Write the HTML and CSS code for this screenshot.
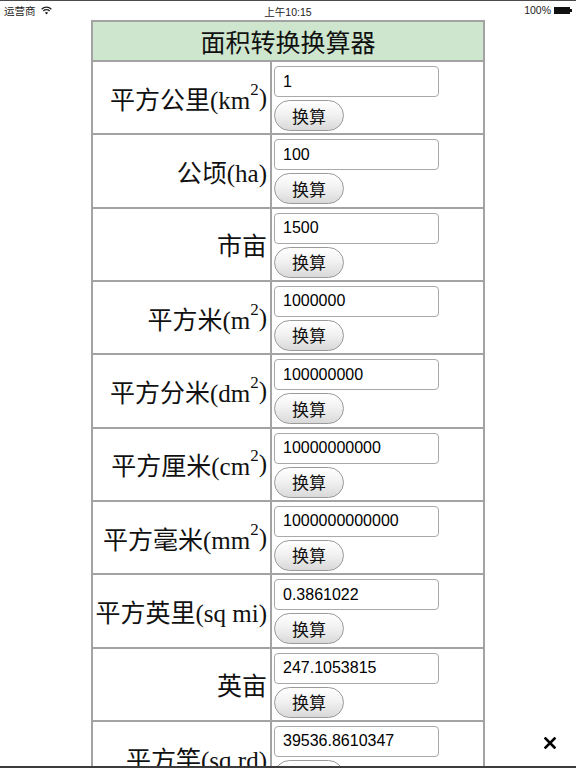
FILE: index.html
```html
<!DOCTYPE html>
<html lang="zh-CN">
<head>
<meta charset="utf-8">
<title>面积转换换算器</title>
<link rel="stylesheet" href="styles.css">
</head>
<body>
<div class="statusbar">
  <div class="sb-left">
    <span>运营商</span>
    <svg class="wifi" width="11" height="9" viewBox="0 0 11 9">
      <path d="M0.6 3.2 A7 7 0 0 1 10.4 3.2" fill="none" stroke="#222" stroke-width="1.3"/>
      <path d="M2.3 5 A4.6 4.6 0 0 1 8.7 5" fill="none" stroke="#222" stroke-width="1.3"/>
      <path d="M3.9 6.8 L5.5 8.6 L7.1 6.8 A2.3 2.3 0 0 0 3.9 6.8 Z" fill="#222"/>
    </svg>
  </div>
  <div class="sb-center">上午10:15</div>
  <div class="sb-right">
    <span>100%</span>
    <span class="battery"><span class="battery-body"></span><span class="battery-nub"></span></span>
  </div>
</div>

<div class="converter">
  <div class="title">面积转换换算器</div>

  <div class="label">平方公里(km<span class="sup">2</span>)</div>
  <div class="field"><input class="num" type="text" value="1"><button class="btn">换算</button></div>

  <div class="label">公顷(ha)</div>
  <div class="field"><input class="num" type="text" value="100"><button class="btn">换算</button></div>

  <div class="label">市亩</div>
  <div class="field"><input class="num" type="text" value="1500"><button class="btn">换算</button></div>

  <div class="label">平方米(m<span class="sup">2</span>)</div>
  <div class="field"><input class="num" type="text" value="1000000"><button class="btn">换算</button></div>

  <div class="label">平方分米(dm<span class="sup">2</span>)</div>
  <div class="field"><input class="num" type="text" value="100000000"><button class="btn">换算</button></div>

  <div class="label">平方厘米(cm<span class="sup">2</span>)</div>
  <div class="field"><input class="num" type="text" value="10000000000"><button class="btn">换算</button></div>

  <div class="label">平方毫米(mm<span class="sup">2</span>)</div>
  <div class="field"><input class="num" type="text" value="1000000000000"><button class="btn">换算</button></div>

  <div class="label">平方英里(sq mi)</div>
  <div class="field"><input class="num" type="text" value="0.3861022"><button class="btn">换算</button></div>

  <div class="label">英亩</div>
  <div class="field"><input class="num" type="text" value="247.1053815"><button class="btn">换算</button></div>

  <div class="label">平方竿(sq rd)</div>
  <div class="field"><input class="num" type="text" value="39536.8610347"><button class="btn">换算</button></div>

  <div class="label">平方码(sq yd)</div>
  <div class="field"><input class="num" type="text" value="1195990.0463011"><button class="btn">换算</button></div>

  <div class="label">平方英尺(sq ft)</div>
  <div class="field"><input class="num" type="text" value="10763910.4167097"><button class="btn">换算</button></div>
</div>

<div class="close">
  <svg width="12" height="12" viewBox="0 0 12 12">
    <path d="M1.5 1.5 L10.5 10.5 M10.5 1.5 L1.5 10.5" stroke="#000" stroke-width="2.6" stroke-linecap="square"/>
  </svg>
</div>
<div class="bottom-edge"></div>
</body>
</html>
```
FILE: styles.css
```css
html {
  overflow: hidden;
  scrollbar-width: none;
}

body {
  margin: 0;
  background: #ffffff;
  font-family: "Liberation Sans", "Noto Sans CJK SC", sans-serif;
  color: #000;
}

.statusbar {
  height: 20px;
  box-sizing: border-box;
  border-top: 1px solid #4a4a4a;
  display: flex;
  align-items: center;
  justify-content: space-between;
  padding: 0 4px 1px 4px;
  font-size: 10.5px;
  color: #222;
  position: relative;
}

.sb-left {
  display: flex;
  align-items: center;
  gap: 5px;
}

.wifi {
  display: block;
}

.sb-center {
  position: absolute;
  left: 0;
  right: 0;
  top: 3px;
  text-align: center;
  pointer-events: none;
}

.sb-right {
  display: flex;
  align-items: center;
  gap: 3px;
}

.battery {
  display: flex;
  align-items: center;
}

.battery-body {
  width: 16px;
  height: 7px;
  background: #111;
  display: block;
}

.battery-nub {
  width: 2px;
  height: 3px;
  background: #111;
  display: block;
}

.converter {
  width: 394px;
  margin: 0 auto;
  box-sizing: border-box;
  border: 1px solid #a3a3a3;
  display: grid;
  grid-template-columns: 179px 1fr;
  grid-template-rows: 40px;
  grid-auto-rows: 73.333px;
}

.title {
  grid-column: 1 / -1;
  box-sizing: border-box;
  border: 1px solid #a3a3a3;
  background: #cde6cd;
  display: flex;
  align-items: center;
  justify-content: center;
  font-family: "Noto Sans CJK SC", sans-serif;
  font-size: 25px;
  color: #111;
  padding-bottom: 1px;
}

.label {
  box-sizing: border-box;
  border: 1px solid #a3a3a3;
  display: flex;
  align-items: center;
  justify-content: flex-end;
  padding-right: 3px;
  font-family: "Liberation Serif", "Noto Sans CJK SC", serif;
  font-size: 25px;
  white-space: nowrap;
  color: #111;
}

.sup {
  font-size: 17px;
  position: relative;
  top: -8px;
}

.field {
  box-sizing: border-box;
  border: 1px solid #a3a3a3;
  display: flex;
  flex-direction: column;
  align-items: flex-start;
  gap: 3px;
  padding: 4px 0 0 2px;
}

.num {
  width: 165px;
  height: 31px;
  box-sizing: border-box;
  border: 1px solid #a9a9a9;
  border-radius: 4px;
  padding: 0 8px;
  margin: 0;
  font-family: "Liberation Sans", sans-serif;
  font-size: 16px;
  color: #000;
  background: #fff;
  outline: none;
}

.btn {
  width: 70px;
  height: 31px;
  box-sizing: border-box;
  border: 1px solid #9a9a9a;
  border-radius: 16px;
  margin: 0;
  padding: 0 0 1px 0;
  background: linear-gradient(#ffffff 0%, #f2f2f2 45%, #d9d9d9 100%);
  font-family: "Noto Sans CJK SC", sans-serif;
  font-size: 17px;
  color: #111;
  line-height: 1;
}

.close {
  position: fixed;
  left: 544px;
  top: 737px;
  width: 12px;
  height: 12px;
}

.close svg {
  display: block;
}

.bottom-edge {
  position: fixed;
  left: 0;
  right: 0;
  bottom: 0;
  height: 2px;
  background: #3c3c3c;
}
```
